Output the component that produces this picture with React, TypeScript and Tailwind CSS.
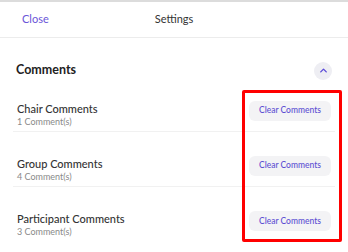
import { ChevronUp } from 'lucide-react';

const rows = [
    { title: 'Chair Comments', count: '1 Comment(s)' },
    { title: 'Group Comments', count: '4 Comment(s)' },
    { title: 'Participant Comments', count: '3 Comment(s)' },
];

export default function App() {
    return (
        <div className="w-[348px] h-[252px] bg-white overflow-hidden font-['Lato',sans-serif] border-t-2 border-[#dcdcdc]">
            <div className="relative h-[36px] border-b border-[#ececec] flex items-center">
                <button className="ml-[22px] text-[11px] text-[#6a55d8]">Close</button>
                <div className="absolute left-0 right-0 text-center text-[11px] text-[#333] pointer-events-none">Settings</div>
            </div>
            <div className="px-[13px]">
                <div className="flex items-center justify-between h-[39px] pt-[26px] pl-[3px]">
                    <h2 className="text-[12.5px] font-bold text-[#222] leading-none">Comments</h2>
                    <div className="w-[18px] h-[18px] rounded-full bg-[#eeeef3] flex items-center justify-center mr-[3px]">
                        <ChevronUp className="w-[11px] h-[11px] text-[#5b4bd8]" strokeWidth={3} />
                    </div>
                </div>
                <div className="relative">
                    {rows.map((r, i) => (
                        <div key={r.title} className={`flex items-center justify-between h-[55px] pt-[17px] ${i < rows.length - 1 ? 'border-b border-[#f1f1f1]' : ''}`}>
                            <div className="pl-[4px] mt-[4px]">
                                <div className="text-[11px] font-medium text-[#333] leading-[14px]">{r.title}</div>
                                <div className="text-[9px] text-[#8a8a8a] leading-[12px]">{r.count}</div>
                            </div>
                            <button className="h-[20px] w-[82px] mr-[4px] mt-[-4px] rounded-[6px] bg-[#f3f3f5] text-[8.5px] text-[#5d4fd3] font-medium">Clear Comments</button>
                        </div>
                    ))}
                    <div className="absolute left-[229px] top-[13px] w-[100px] h-[152px] border-[3px] border-[#ff0000] rounded-[2px] pointer-events-none" />
                </div>
            </div>
        </div>
    );
}
